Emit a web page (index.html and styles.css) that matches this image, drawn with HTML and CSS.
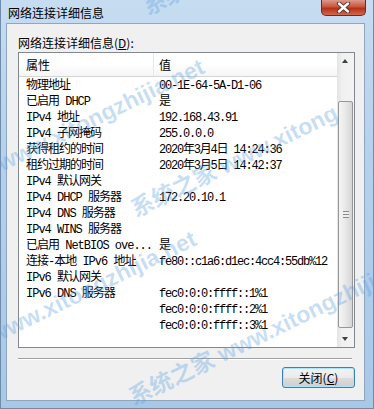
FILE: index.html
```html
<!DOCTYPE html>
<html lang="zh-CN">
<head>
<meta charset="UTF-8">
<title>网络连接详细信息</title>
<link rel="stylesheet" href="styles.css">
</head>
<body>
<div class="window">
    <div class="titlebar">
        <span class="title">网络连接详细信息</span>
        <span class="close">
            <svg width="15" height="11" viewBox="0 0 15 11">
                <path d="M3 1.5 L12 9.5 M12 1.5 L3 9.5" stroke="#5a2a22" stroke-width="4.2" stroke-linecap="round"/>
                <path d="M3 1.5 L12 9.5 M12 1.5 L3 9.5" stroke="#ffffff" stroke-width="2.4" stroke-linecap="round"/>
            </svg>
        </span>
    </div>

    <div class="client">
        <div class="caption">网络连接详细信息(<u>D</u>):</div>

        <div class="listbox">
            <div class="list">
                <div class="row head"><span class="key">属性</span><span class="val">值</span></div>
                <div class="row"><span class="key">物理地址</span><span class="val">00-1E-64-5A-D1-06</span></div>
                <div class="row"><span class="key">已启用 DHCP</span><span class="val">是</span></div>
                <div class="row"><span class="key">IPv4 地址</span><span class="val">192.168.43.91</span></div>
                <div class="row"><span class="key">IPv4 子网掩码</span><span class="val">255.0.0.0</span></div>
                <div class="row"><span class="key">获得租约的时间</span><span class="val">2020年3月4日 14:24:36</span></div>
                <div class="row"><span class="key">租约过期的时间</span><span class="val">2020年3月5日 14:42:37</span></div>
                <div class="row"><span class="key">IPv4 默认网关</span><span class="val"></span></div>
                <div class="row"><span class="key">IPv4 DHCP 服务器</span><span class="val">172.20.10.1</span></div>
                <div class="row"><span class="key">IPv4 DNS 服务器</span><span class="val"></span></div>
                <div class="row"><span class="key">IPv4 WINS 服务器</span><span class="val"></span></div>
                <div class="row"><span class="key">已启用 NetBIOS ove...</span><span class="val">是</span></div>
                <div class="row"><span class="key">连接-本地 IPv6 地址</span><span class="val">fe80::c1a6:d1ec:4cc4:55db%12</span></div>
                <div class="row"><span class="key">IPv6 默认网关</span><span class="val"></span></div>
                <div class="row"><span class="key">IPv6 DNS 服务器</span><span class="val">fec0:0:0:ffff::1%1</span></div>
                <div class="row"><span class="key"></span><span class="val">fec0:0:0:ffff::2%1</span></div>
                <div class="row"><span class="key"></span><span class="val">fec0:0:0:ffff::3%1</span></div>
            </div>
            <div class="scrollbar">
                <div class="arrow up"></div>
                <div class="track">
                    <div class="thumb"><span class="grip"></span></div>
                </div>
                <div class="arrow down"></div>
            </div>
        </div>

        <div class="sep"></div>

        <div class="actions">
            <button class="btn">关闭(<u>C</u>)</button>
        </div>
    </div>

    <!-- watermark -->
    <span class="mark m1">www.xitongzhijia.net</span>
    <span class="mark m2">系统之家 www.xitong</span>
    <span class="mark m3">www.xitongzhijia.net</span>
    <span class="mark m4">系统之家 www.xitongzhijia</span>
    <span class="mark m5">系统之家</span>
</div>
</body>
</html>
```

FILE: styles.css
```css
body {
    margin: 0;
    font-family: "Noto Sans CJK SC", sans-serif;
    font-size: 12px;
    color: #000;
}
.window {
    position: relative;
    overflow: hidden;
    width: 374px;
    height: 409px;
    box-sizing: border-box;
    display: flex;
    flex-direction: column;
    padding: 0 8px 7px 5px;
    background: linear-gradient(#c6dcf1, #b4d0ec 40%, #a8c8e8);
    border: 1px solid #6f8cab;
    border-top: none;
}
.titlebar {
    height: 23px;
    display: flex;
    justify-content: space-between;
    align-items: flex-start;
}
.title {
    margin: 4px 0 0 2px;
    line-height: 17px;
}
.close {
    width: 45px;
    height: 16px;
    display: flex;
    align-items: center;
    justify-content: center;
    box-sizing: border-box;
    border: 1px solid #6e2a20;
    border-top: none;
    border-radius: 0 0 5px 5px;
    background: linear-gradient(#dc9a8a, #c9553f 45%, #b52f18 55%, #d2694d);
    margin-right: -1px;
}
.client {
    flex: 1;
    display: flex;
    flex-direction: column;
    padding: 11px 9px 0 11px;
    background: #f0f0f0;
    border: 1px solid #8fa6bf;
}
.caption {
    line-height: 16px;
}
.listbox {
    margin-top: 1px;
    height: 296px;
    box-sizing: border-box;
    display: flex;
    border: 1px solid #828790;
    background: #fff;
}
.list {
    flex: 1;
}
.row {
    display: flex;
    height: 16px;
    line-height: 16px;
    font-family: "Liberation Mono", "Noto Sans CJK SC", monospace;
    letter-spacing: -1px;
    white-space: nowrap;
}
.key {
    width: 135px;
    padding-left: 7px;
    box-sizing: border-box;
}
.val {
    padding-left: 5px;
    letter-spacing: -1.2px;
}
.row.head {
    height: 23px;
    line-height: 23px;
    margin-bottom: 1px;
    font-family: "Noto Sans CJK SC", sans-serif;
    letter-spacing: 0;
    background: linear-gradient(#ffffff, #ffffff 50%, #f4f5f7);
    border-bottom: 1px solid #d5d5d5;
}
.row.head .key {
    border-right: 1px solid #e3e8ee;
}
.scrollbar {
    width: 17px;
    display: flex;
    flex-direction: column;
    background: linear-gradient(to right, #e3e3e3, #f0f0f0 30%, #f3f3f3);
}
.arrow {
    height: 17px;
    position: relative;
}
.arrow::after {
    content: "";
    position: absolute;
    left: 5px;
    top: 6px;
    border-left: 3.5px solid transparent;
    border-right: 3.5px solid transparent;
}
.arrow.up::after {
    border-bottom: 4px solid #404040;
}
.arrow.down::after {
    top: 7px;
    border-top: 4px solid #404040;
}
.track {
    flex: 1;
    padding-top: 31px;
}
.thumb {
    margin-left: 1px;
    width: 15px;
    height: 227px;
    box-sizing: border-box;
    border: 1px solid #979797;
    border-radius: 2px;
    background: linear-gradient(to right, #f5f5f5, #e8e8e8 50%, #d5d5d5);
    display: flex;
    align-items: center;
    justify-content: center;
}
.grip {
    width: 6px;
    height: 7px;
    background: repeating-linear-gradient(#8b8b8b 0, #8b8b8b 1px, #eeeeee 1px, #eeeeee 3px);
}
.sep {
    margin: 10px 3px 0 0;
    border-top: 1px solid #a0a0a0;
    border-bottom: 1px solid #ffffff;
}
.actions {
    display: flex;
    justify-content: flex-end;
    margin-top: 7px;
}
.btn {
    width: 73px;
    height: 21px;
    padding: 0;
    font-family: "Noto Sans CJK SC", sans-serif;
    font-size: 12px;
    color: #000;
    border: 1px solid #3c7fb1;
    border-radius: 3px;
    box-shadow: inset 0 0 0 1px #aee4fa;
    background: linear-gradient(#f2f2f2, #ebebeb 50%, #dddddd 51%, #cfcfcf);
}
.btn u {
    text-decoration: underline;
}
.mark {
    position: absolute;
    font-family: "Liberation Sans", "Noto Sans CJK SC", sans-serif;
    font-weight: bold;
    font-size: 23px;
    color: rgba(90, 160, 225, 0.34);
    white-space: nowrap;
    transform-origin: left bottom;
    transform: rotate(-26deg);
    pointer-events: none;
}
.m1 { left: 4px; top: 150px; }
.m2 { left: 138px; top: 190px; }
.m3 { left: -4px; top: 322px; }
.m4 { left: 136px; top: 378px; }
.m5 { left: 150px; top: -12px; }
```
